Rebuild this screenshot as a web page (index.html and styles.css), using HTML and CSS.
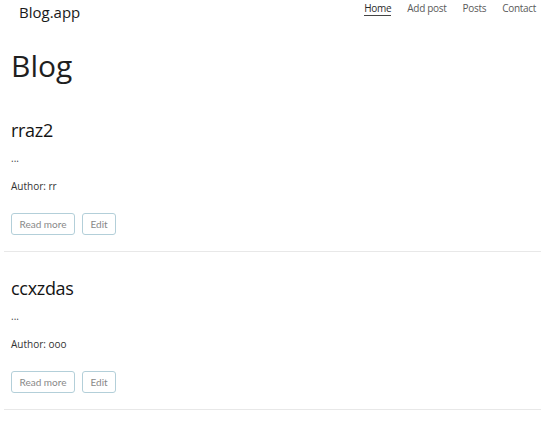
FILE: index.html
```html
<!DOCTYPE html>
<html>
<head>
<meta charset="utf-8">
<link rel="stylesheet" href="styles.css">
</head>
<body>
<header class="topbar">
  <div class="brand">Blog.app</div>
  <nav class="nav">
    <a class="nav-link active">Home</a>
    <a class="nav-link">Add post</a>
    <a class="nav-link">Posts</a>
    <a class="nav-link">Contact</a>
  </nav>
</header>
<main class="content">
  <h1 class="page-title">Blog</h1>
  <article class="post">
    <h2 class="post-title">rraz2</h2>
    <p class="post-excerpt">...</p>
    <p class="post-author">Author: rr</p>
    <div class="post-actions">
      <button class="btn">Read more</button>
      <button class="btn">Edit</button>
    </div>
  </article>
  <article class="post">
    <h2 class="post-title">ccxzdas</h2>
    <p class="post-excerpt">...</p>
    <p class="post-author">Author: ooo</p>
    <div class="post-actions">
      <button class="btn">Read more</button>
      <button class="btn">Edit</button>
    </div>
  </article>
</main>
</body>
</html>
```
FILE: styles.css
```css
* { box-sizing: border-box; }
body {
  margin: 0;
  font-family: "Open Sans", sans-serif;
  color: #212529;
  background: #fff;
}
.topbar {
  display: flex;
  justify-content: space-between;
  align-items: flex-start;
  padding: 0 14px 0 19px;
  height: 24px;
}
.brand {
  font-size: 15px;
  line-height: 24px;
  color: #1a1a1a;
}
.nav {
  display: flex;
  gap: 16px;
  padding-top: 2px;
}
.nav-link {
  font-size: 10px;
  line-height: 13px;
  letter-spacing: -0.3px;
  color: #5a5a5a;
  text-decoration: none;
}
.nav-link.active {
  color: #2a2a2a;
  border-bottom: 1px solid #444;
}
.content {
  padding: 0 9px 0 4px;
}
.page-title {
  margin: 0;
  padding: 24px 7px 10px;
  font-size: 30px;
  font-weight: 400;
  line-height: 36px;
  color: #1f1f1f;
}
.post {
  padding: 24px 7px 16px;
  border-bottom: 1px solid #e8e8e8;
}
.post-title {
  margin: 0;
  font-size: 18px;
  font-weight: 400;
  line-height: 24px;
  letter-spacing: -0.3px;
  color: #141414;
}
.post-excerpt {
  margin: 8px 0 0;
  font-size: 10px;
  line-height: 16px;
  color: #444;
}
.post-author {
  margin: 12px 0 0;
  font-size: 10px;
  line-height: 16px;
  color: #333;
}
.post-actions {
  display: flex;
  gap: 7px;
  margin-top: 19px;
}
.btn {
  font-family: Lato, sans-serif;
  font-size: 10px;
  color: #888;
  background: #fff;
  border: 1px solid #b3cfd9;
  border-radius: 3px;
  height: 22px;
  padding: 0 7.5px;
}
```
